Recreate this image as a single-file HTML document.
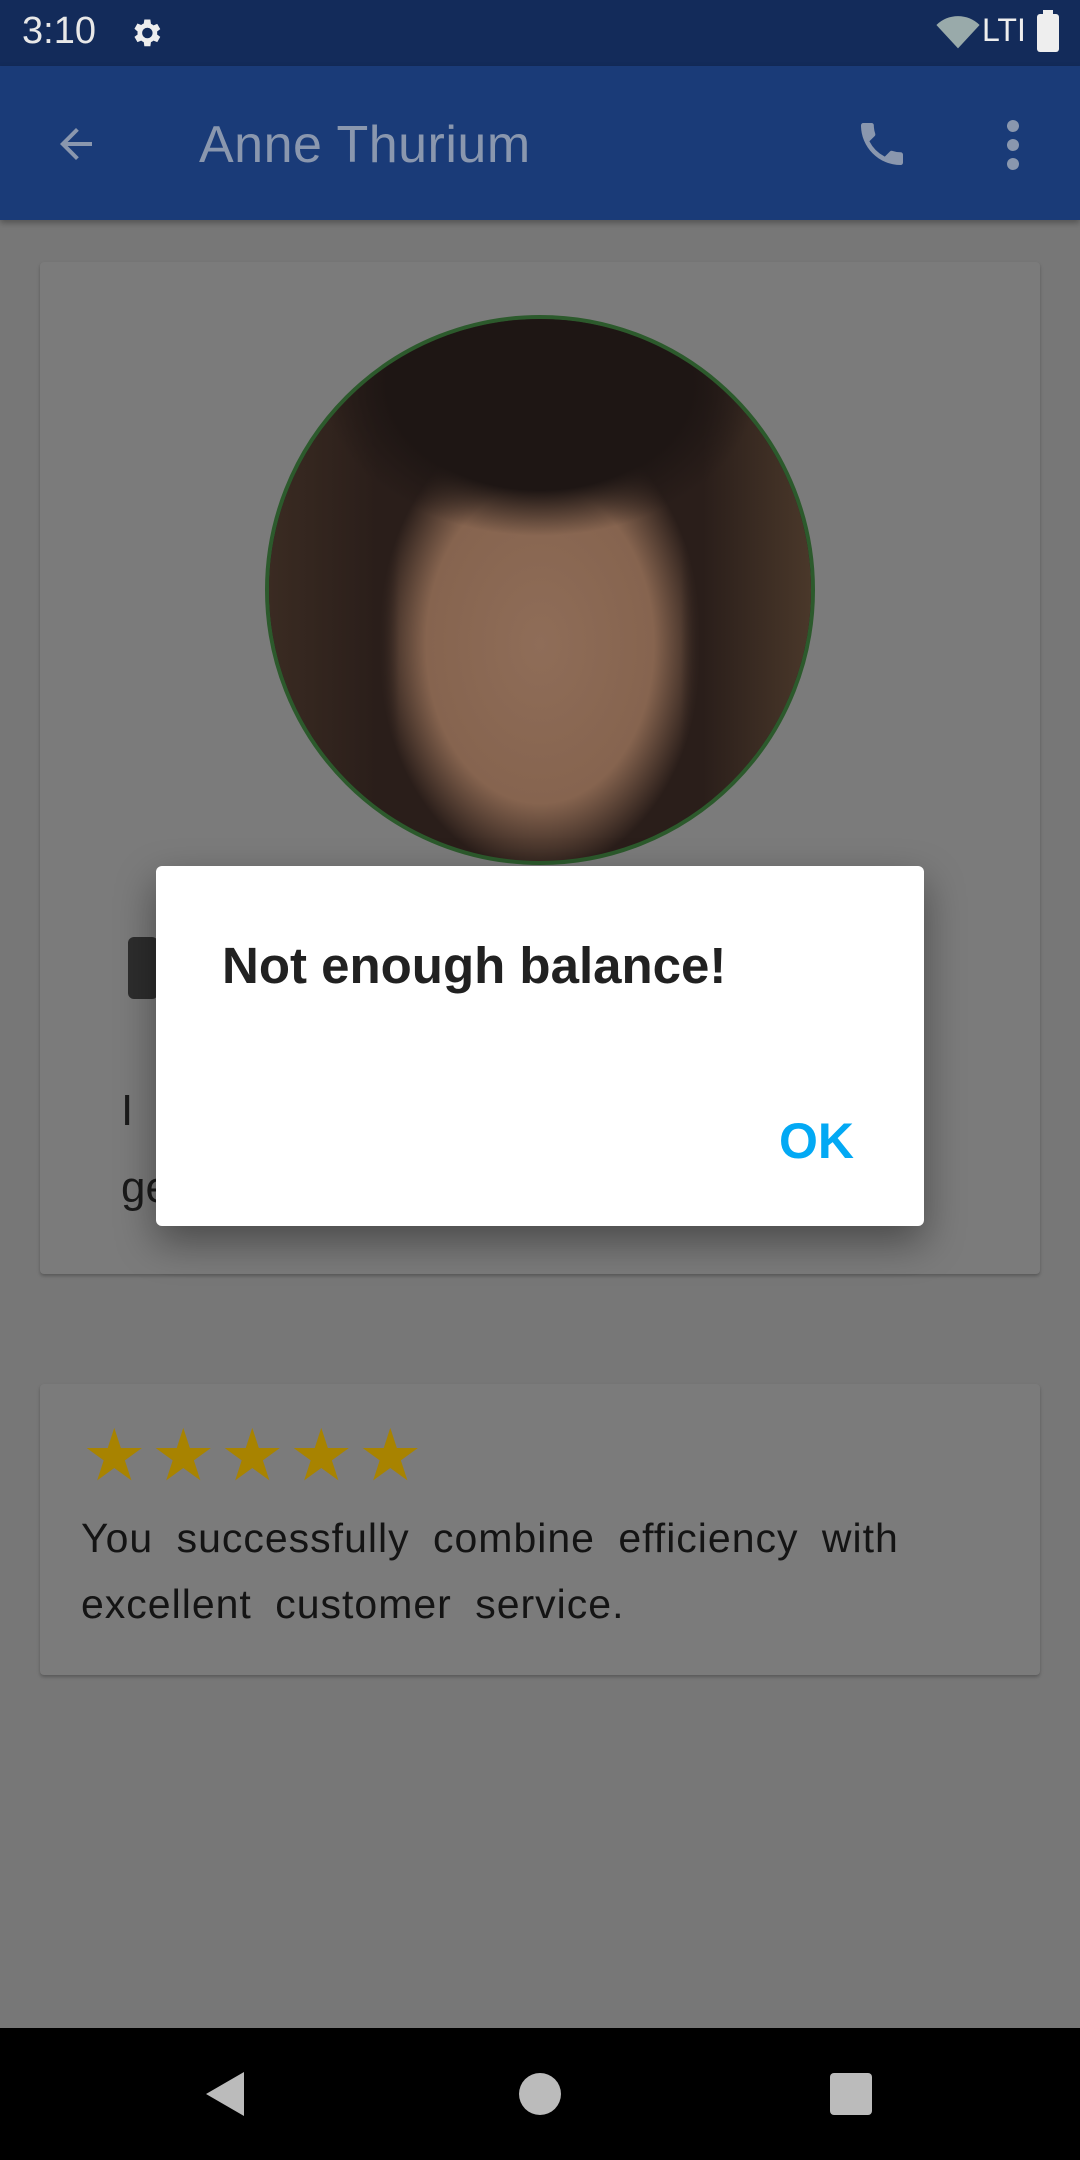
<!DOCTYPE html>
<html><head><meta charset="utf-8"><style>
*{margin:0;padding:0;box-sizing:border-box}
body{width:1080px;height:2160px;background:#777;font-family:"Liberation Sans",sans-serif;position:relative;overflow:hidden}
.abs{position:absolute}
.st{position:absolute;top:1420px;color:#a88300;font-size:72px;line-height:72px}
</style></head><body>
<div class="abs" style="left:0;top:0;width:1080px;height:66px;background:#132b5a"></div>
<div class="abs" style="left:22px;top:10px;color:#e8e8e8;font-size:38px">3:10</div>
<svg class="abs" style="left:128px;top:15px" width="36" height="36" viewBox="0 0 24 24"><path fill="#eee" d="M19.4 13a7.5 7.5 0 000-2l2.1-1.6-2-3.5-2.5 1a7 7 0 00-1.7-1L14.9 3h-4l-.4 2.7a7 7 0 00-1.7 1l-2.5-1-2 3.5L6.4 11a7.5 7.5 0 000 2l-2.1 1.6 2 3.5 2.5-1a7 7 0 001.7 1l.4 2.7h4l.4-2.7a7 7 0 001.7-1l2.5 1 2-3.5zM12.9 15.5a3.5 3.5 0 110-7 3.5 3.5 0 010 7z"/></svg>
<svg class="abs" style="left:936px;top:16px" width="44" height="36" viewBox="0 0 24 20"><path fill="#9aa" d="M12 18L0 5a17 17 0 0124 0z"/></svg>
<div class="abs" style="left:982px;top:12px;color:#eee;font-size:32px">LTI</div>
<div class="abs" style="left:1037px;top:14px;width:22px;height:38px;background:#eee;border-radius:3px"></div>
<div class="abs" style="left:1043px;top:10px;width:10px;height:6px;background:#eee"></div>
<div class="abs" style="left:0;top:66px;width:1080px;height:154px;background:#1a3b78;box-shadow:0 3px 6px rgba(0,0,0,.3)"></div>
<svg class="abs" style="left:52px;top:120px" width="48" height="48" viewBox="0 0 24 24"><path fill="#8a97ae" d="M20 11H7.8l5.6-5.6L12 4l-8 8 8 8 1.4-1.4L7.8 13H20z"/></svg>
<div class="abs" style="left:199px;top:115px;color:#8a97ae;font-size:52px;letter-spacing:0.5px">Anne Thurium</div>
<svg class="abs" style="left:854px;top:116px" width="56" height="56" viewBox="0 0 24 24"><path fill="#8a97ae" d="M6.6 10.8a15 15 0 006.6 6.6l2.2-2.2a1 1 0 011-.25 11 11 0 003.6.6 1 1 0 011 1V20a1 1 0 01-1 1A17 17 0 013 4a1 1 0 011-1h3.5a1 1 0 011 1 11 11 0 00.6 3.6 1 1 0 01-.25 1z"/></svg>
<div class="abs" style="left:1007px;top:120px;width:12px;height:12px;border-radius:50%;background:#8a97ae;box-shadow:0 19px 0 #8a97ae,0 38px 0 #8a97ae"></div>
<div class="abs" style="left:40px;top:262px;width:1000px;height:1012px;background:#7b7b7b;border-radius:4px;box-shadow:0 2px 3px rgba(0,0,0,.25)"></div>
<div class="abs" style="left:265px;top:315px;width:550px;height:550px;border-radius:50%;border:4px solid #2c5a2c;overflow:hidden;background:radial-gradient(ellipse 30% 42% at 50% 60%,#8f6d58 0,#86644f 70%,#2a1e1a 100%),#6e5238">
<div class="abs" style="left:0;top:0;width:100%;height:100%;background:linear-gradient(90deg,#3a2b22 0,#2a1e1a 20%,transparent 24%,transparent 76%,#2a1e1a 80%,#4a382a 100%)"></div>
<div class="abs" style="left:0;top:0;width:100%;height:100%;background:radial-gradient(ellipse 40% 28% at 50% 12%,#1e1614 70%,transparent 100%)"></div>
</div>
<div class="abs" style="left:128px;top:937px;width:30px;height:62px;background:#2d2d2d;border-radius:6px"></div>
<div class="abs" style="left:121px;top:1086px;color:#1a1a1a;font-size:44px">I</div>
<div class="abs" style="left:121px;top:1163px;color:#1a1a1a;font-size:44px">ge</div>
<div class="abs" style="left:40px;top:1384px;width:1000px;height:291px;background:#7b7b7b;border-radius:4px;box-shadow:0 2px 3px rgba(0,0,0,.25)"></div>
<div class="st" style="left:82px">★</div>
<div class="st" style="left:151px">★</div>
<div class="st" style="left:220px">★</div>
<div class="st" style="left:289px">★</div>
<div class="st" style="left:358px">★</div>
<div class="abs" style="left:81px;top:1505px;color:#141414;font-size:41px;line-height:66px;width:1000px;letter-spacing:1px;word-spacing:11px">You successfully combine efficiency with<br>excellent customer service.</div>
<div class="abs" style="left:156px;top:866px;width:768px;height:360px;background:#fff;border-radius:6px;box-shadow:0 16px 40px rgba(0,0,0,.4)"></div>
<div class="abs" style="left:222px;top:936px;color:#212121;font-size:51px;font-weight:bold">Not enough balance!</div>
<div class="abs" style="left:779px;top:1112px;color:#03a9f4;font-size:50px;font-weight:bold">OK</div>
<div class="abs" style="left:0;top:2028px;width:1080px;height:132px;background:#000"></div>
<svg class="abs" style="left:204px;top:2070px" width="42" height="48" viewBox="0 0 42 48"><path fill="#bbb" d="M40 2v44L2 24z"/></svg>
<div class="abs" style="left:519px;top:2073px;width:42px;height:42px;border-radius:50%;background:#bbb"></div>
<div class="abs" style="left:830px;top:2073px;width:42px;height:42px;border-radius:4px;background:#bbb"></div>
</body></html>
